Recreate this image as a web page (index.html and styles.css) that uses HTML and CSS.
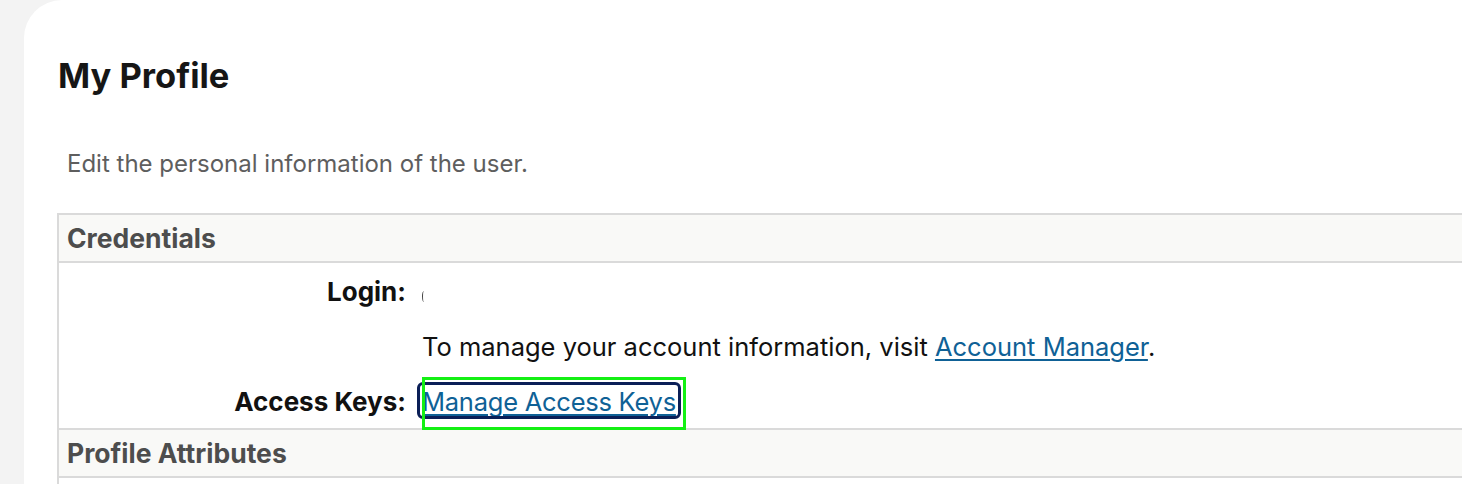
FILE: index.html
```html
<!DOCTYPE html>
<html lang="en">
<head>
<meta charset="utf-8">
<title>My Profile</title>
<link rel="stylesheet" href="styles.css">
</head>
<body>
<div class="page">
  <main class="card">
    <h1 class="title">My Profile</h1>
    <p class="desc">Edit the personal information of the user.</p>
    <section class="table">
      <div class="section-head">Credentials</div>
      <div class="rows">
        <div class="label">Login:</div>
        <div class="value"><span class="login-val" aria-hidden="true"></span></div>
        <div class="label"></div>
        <div class="value">To manage your account information, visit <a class="link" href="#">Account Manager</a>.</div>
        <div class="label">Access Keys:</div>
        <div class="value"><span class="focus-wrap"><a class="link link-tight" href="#">Manage Access Keys</a><span class="highlight"></span></span></div>
      </div>
      <div class="section-head">Profile Attributes</div>
      <div class="rows rows-empty"></div>
    </section>
  </main>
</div>
</body>
</html>
```
FILE: styles.css
```css
html, body {
  margin: 0;
  padding: 0;
}
body {
  background: #f3f3f3;
  font-family: Inter, "Liberation Sans", sans-serif;
  overflow: hidden;
  height: 484px;
}
.page {
  padding-left: 24px;
  width: 1600px;
}
.card {
  background: #ffffff;
  border-top-left-radius: 38px;
  padding: 55px 0 0 33px;
  min-height: 484px;
  box-sizing: border-box;
}
.title {
  margin: 0;
  font-size: 34.5px;
  line-height: 41px;
  font-weight: 700;
  color: #161616;
  padding-left: 1px;
}
.desc {
  margin: 53px 0 35px 10px;
  font-size: 24px;
  line-height: 29px;
  color: #5e5e5e;
}
.table {
  border-left: 2px solid #dadada;
  border-top: 2px solid #dadada;
}
.section-head {
  background: #f9f9f7;
  height: 46px;
  line-height: 46px;
  padding-left: 8px;
  font-size: 26.5px;
  font-weight: 700;
  color: #4d4d4d;
  border-bottom: 2px solid #dadada;
}
.rows {
  display: grid;
  grid-template-columns: 347px 1fr;
  font-size: 25.5px;
  color: #111111;
  border-bottom: 2px solid #dadada;
}
.rows-empty {
  border-bottom: none;
  height: 10px;
}
.label {
  font-weight: 700;
  font-size: 26px;
  text-align: right;
  padding: 13px 0 11px;
  line-height: 31px;
}
.value {
  padding: 13px 0 11px 16px;
  line-height: 31px;
}
.login-val {
  display: inline-block;
  width: 4px;
  height: 11px;
  border-left: 1.5px solid #444;
  border-radius: 50%;
  box-sizing: border-box;
  vertical-align: -1px;
}
.link {
  color: #0f6196;
  text-decoration: underline;
  text-decoration-thickness: 1.5px;
  text-underline-offset: 3px;
}
.link-tight {
  letter-spacing: -0.25px;
}
.focus-wrap {
  position: relative;
  display: inline-block;
}
.focus-wrap::before {
  content: "";
  position: absolute;
  left: -5px;
  right: -5px;
  top: -4px;
  height: 37px;
  border: 3px solid #0b1f57;
  border-radius: 6px;
  box-sizing: border-box;
  pointer-events: none;
}
.highlight {
  position: absolute;
  left: 0;
  top: -9px;
  width: 264px;
  height: 53px;
  border: 3px solid #14f014;
  box-sizing: border-box;
  pointer-events: none;
}
```
